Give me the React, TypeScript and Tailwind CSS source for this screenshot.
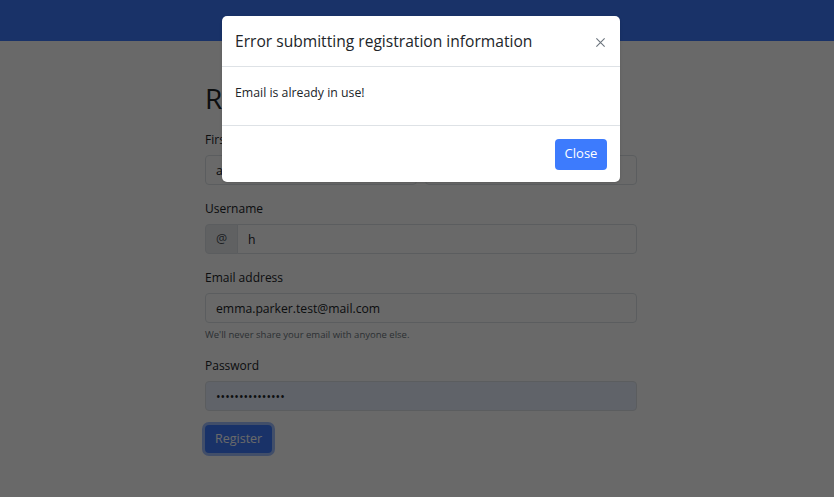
import React from "react";

const font = { fontFamily: '"Open Sans", "Noto Sans", sans-serif' };

function Field({ label, children }: { label: string; children: React.ReactNode }) {
  return (
    <div className="mb-[14px]">
      <label className="block text-[12px] leading-[19px] mb-[6px] text-[#212529]">{label}</label>
      {children}
    </div>
  );
}

const inputCls =
  "w-full h-[30px] px-[10px] border border-[#dee2e6] rounded-[4px] text-[12.2px] text-[#212529] outline-none";

export default function App() {
  return (
    <div className="relative min-h-[497px] bg-white overflow-hidden" style={font}>
      <nav className="h-[41px] bg-[#3d7bfd]" />

      <form className="ml-[205px] w-[432px] pt-[40px]">
        <h1 className="text-[28px] leading-[34px] font-medium text-[#212529] mb-[15px]">Register</h1>

        <div className="grid grid-cols-2 gap-[8px]">
          <Field label="First name">
            <input className={inputCls + " bg-white"} defaultValue="a" />
          </Field>
          <Field label="Last name">
            <input className={inputCls + " bg-white"} defaultValue="" />
          </Field>
        </div>

        <Field label="Username">
          <div className="flex">
            <span className="h-[30px] w-[33px] shrink-0 flex items-center justify-center border border-[#dee2e6] rounded-l-[4px] bg-[#e9ecef] text-[12.5px] text-[#495057]">
              @
            </span>
            <input className={inputCls + " bg-white rounded-l-none -ml-px"} defaultValue="h" />
          </div>
        </Field>

        <div className="mb-[14px]">
          <label className="block text-[12px] leading-[19px] mb-[6px] text-[#212529]">Email address</label>
          <input className={inputCls + " bg-white"} defaultValue="emma.parker.test@mail.com" />
          <div className="text-[9.5px] leading-[14px] mt-[5px] text-[#6c757d]">
            We'll never share your email with anyone else.
          </div>
        </div>

        <Field label="Password">
          <input
            type="password"
            className={inputCls + " bg-[#e8f0fe]"}
            defaultValue="emmaparker1234!"
          />
        </Field>

        <button
          type="button"
          className="h-[28px] px-[10px] rounded-[4px] bg-[#3d7bfd] text-white text-[12.5px] ring-[3px] ring-[#3d7bfd]/50"
        >
          Register
        </button>
      </form>

      <div className="absolute inset-0 bg-black/[0.59]">
        <div className="ml-[222px] mt-[16px] w-[398px] bg-white rounded-[5px] shadow">
          <div className="h-[51px] flex items-center justify-between pt-[2px] pl-[13px] pr-[14px] border-b border-[#dee2e6]">
            <h5 className="text-[15.6px] text-[#212529]">Error submitting registration information</h5>
            <button type="button" className="text-[#6c757d]">
              <svg width="11" height="11" viewBox="0 0 16 16">
                <path d="M2 2L14 14M14 2L2 14" stroke="currentColor" strokeWidth="1.6" />
              </svg>
            </button>
          </div>
          <div className="h-[59px] px-[13px] pt-[17px] text-[12.3px] text-[#212529] border-b border-[#dee2e6]">
            Email is already in use!
          </div>
          <div className="h-[56px] flex items-center justify-end pr-[13px]">
            <button
              type="button"
              className="h-[31px] w-[52px] rounded-[4px] bg-[#3d7bfd] text-white text-[13px]"
            >
              Close
            </button>
          </div>
        </div>
      </div>
    </div>
  );
}
